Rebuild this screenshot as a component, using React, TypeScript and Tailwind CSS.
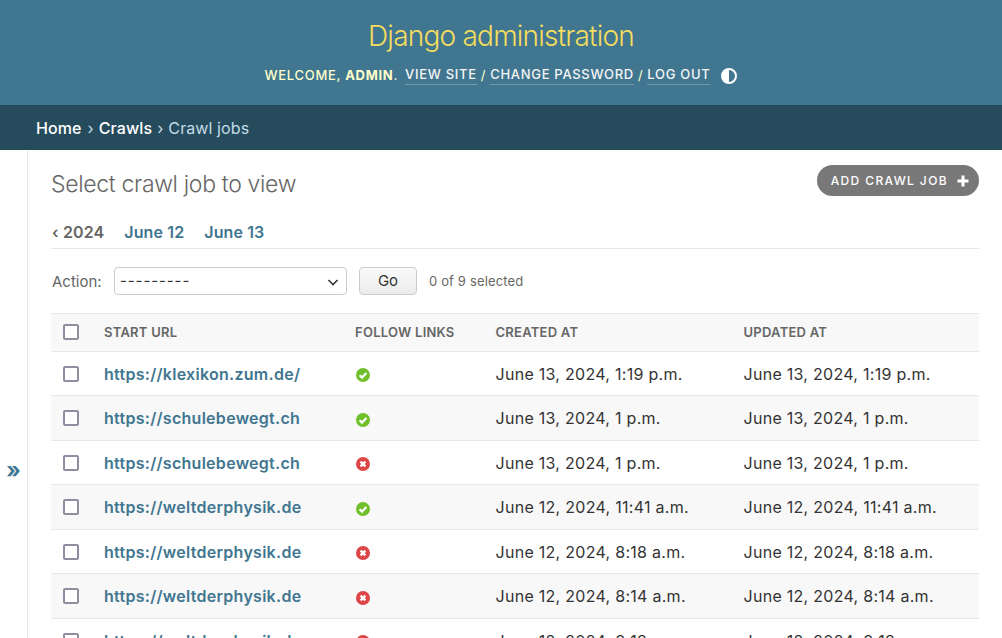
const rows = [
  { url: "https://klexikon.zum.de/", ok: true, date: "June 13, 2024, 1:19 p.m." },
  { url: "https://schulebewegt.ch", ok: true, date: "June 13, 2024, 1 p.m." },
  { url: "https://schulebewegt.ch", ok: false, date: "June 13, 2024, 1 p.m." },
  { url: "https://weltderphysik.de", ok: true, date: "June 12, 2024, 11:41 a.m." },
  { url: "https://weltderphysik.de", ok: false, date: "June 12, 2024, 8:18 a.m." },
  { url: "https://weltderphysik.de", ok: false, date: "June 12, 2024, 8:14 a.m." },
  { url: "https://weltderphysik.de", ok: false, date: "June 12, 2024, 8:13 a.m." },
];

function Status({ ok }: { ok: boolean }) {
  return ok ? (
    <svg width="14" height="14" viewBox="0 0 14 14">
      <circle cx="7" cy="7" r="7" fill="#70bf2b" />
      <path d="M3.6 7.2 L6 9.6 L10.4 4.9" fill="none" stroke="#fff" strokeWidth="2.2" />
    </svg>
  ) : (
    <svg width="14" height="14" viewBox="0 0 14 14">
      <circle cx="7" cy="7" r="7" fill="#dd4646" />
      <path d="M4.6 4.6 L9.4 9.4 M9.4 4.6 L4.6 9.4" fill="none" stroke="#fff" strokeWidth="2.4" />
    </svg>
  );
}

function Box() {
  return <div className="w-4 h-4 rounded-[2px] border-2 border-[#8e8ea0] bg-white" />;
}

export default function App() {
  return (
    <div className="h-[638px] overflow-hidden bg-white text-[#333] font-['Inter','Liberation_Sans',sans-serif]">
      <header className="h-[105px] bg-[#417690] flex flex-col items-center pt-[19px]">
        <h1 className="text-[28px] leading-[34px] font-light text-[#f5dd5d] tracking-[-0.78px]">Django administration</h1>
        <div className="mt-[11px] flex items-center text-[13px] leading-[20px] tracking-[0.7px] uppercase text-[#ffc] whitespace-nowrap">
          <span className="font-medium">Welcome, <strong className="font-bold">admin</strong>.</span>
          <a className="ml-[7px] font-medium border-b border-[rgba(255,255,255,0.25)] text-[#f5f5f5]">View site</a>
          <span className="mx-[4px]">/</span>
          <a className="font-medium border-b border-[rgba(255,255,255,0.25)] text-[#f5f5f5]">Change password</a>
          <span className="mx-[4px]">/</span>
          <a className="font-medium border-b border-[rgba(255,255,255,0.25)] text-[#f5f5f5]">Log out</a>
          <svg className="ml-[11px] mt-[2px]" width="16" height="16" viewBox="0 0 16 16">
            <circle cx="8" cy="8" r="7" fill="none" stroke="#fff" strokeWidth="2" />
            <path d="M8 1 A7 7 0 0 0 8 15 Z" fill="#fff" />
          </svg>
        </div>
      </header>
      <nav className="h-[45px] bg-[#264b5d] flex items-center pl-[36px] text-[16px] text-[#c4dce8]">
        <a className="text-white font-medium tracking-[0.1px]">Home</a>
        <span className="ml-[6px] mr-[5px]">›</span>
        <a className="text-white font-medium tracking-[0.1px]">Crawls</a>
        <span className="mx-[5px]">›</span>
        <span className="tracking-[0.1px]">Crawl jobs</span>
      </nav>
      <div className="flex h-[488px]">
        <div className="w-[28px] shrink-0 border-r border-[#e8e8e8] flex justify-center pt-[304px] text-[#417690] text-[22px] font-bold">»</div>
        <main className="flex-1 pl-[23px] pr-[23px] min-w-0">
          <div className="flex justify-between pt-[15px]">
            <h2 className="text-[23px] leading-[38px] font-light text-[#666] tracking-[-0.33px]">Select crawl job to view</h2>
            <a className="h-[31px] rounded-full bg-[#787878] flex items-center pl-[14px] pr-[10px] text-white text-[12px] font-medium tracking-[1.38px] uppercase">
              Add crawl job
              <svg className="ml-[9px]" width="12" height="12" viewBox="0 0 12 12"><path d="M6 0.5 V11.5 M0.5 6 H11.5" stroke="#fff" strokeWidth="3" /></svg>
            </a>
          </div>
          <div className="mt-[9px] h-[37px] flex items-center gap-[20px] border-b border-[#e8e8e8] pt-[3px] pl-[1px] text-[16px] font-semibold text-[#417690] tracking-[0.12px]">
            <span className="text-[#666]">‹ 2024</span>
            <a>June 12</a>
            <a>June 13</a>
          </div>
          <div className="mt-[18px] flex items-center h-[28px] text-[#666]">
            <span className="text-[15px] w-[63px] pl-[1px] pt-[2px]">Action:</span>
            <div className="w-[233px] h-[28px] border border-[#ccc] rounded-[4px] flex items-center justify-between pl-[5px] pr-[7px] pt-[1px] text-[15px] text-[#333]">
              <span className="tracking-[0.9px]">---------</span>
              <svg width="12" height="12" viewBox="0 0 12 12"><path d="M1.5 4 L6 8.5 L10.5 4" fill="none" stroke="#333" strokeWidth="1.6" /></svg>
            </div>
            <button className="ml-[12px] w-[58px] h-[28px] rounded-[4px] border border-[#ccc] bg-[linear-gradient(#fafafa,#ececec)] pt-[1px] text-[15px] text-[#333]">Go</button>
            <span className="ml-[12px] pt-[2px] text-[13px] tracking-[0.15px]">0 of 9 selected</span>
          </div>
          <div className="mt-[18px]">
            <div className="grid grid-cols-[52px_252px_140.5px_248px_1fr] h-[38.8px] items-center bg-[#f8f8f8] border-y border-[#e8e8e8] text-[13px] font-semibold text-[#666] uppercase tracking-[0.25px]">
              <div className="pl-[12px]"><Box /></div>
              <div className="pl-[1px]">Start URL</div>
              <div>Follow links</div>
              <div>Created at</div>
              <div>Updated at</div>
            </div>
            {rows.map((r, i) => (
              <div key={i} className={`grid grid-cols-[52px_252px_140.5px_248px_1fr] h-[44.5px] items-center border-b border-[#e8e8e8] text-[16px] text-[#333] whitespace-nowrap tracking-[0.28px] ${i % 2 ? "bg-[#f8f8f8]" : "bg-white"}`}>
                <div className="pl-[12px]"><Box /></div>
                <a className="pl-[1px] font-semibold text-[#417690]">{r.url}</a>
                <div className="flex items-center h-[14px] mt-[3px] pl-[1px]"><Status ok={r.ok} /></div>
                <div>{r.date}</div>
                <div>{r.date}</div>
              </div>
            ))}
          </div>
        </main>
      </div>
    </div>
  );
}
